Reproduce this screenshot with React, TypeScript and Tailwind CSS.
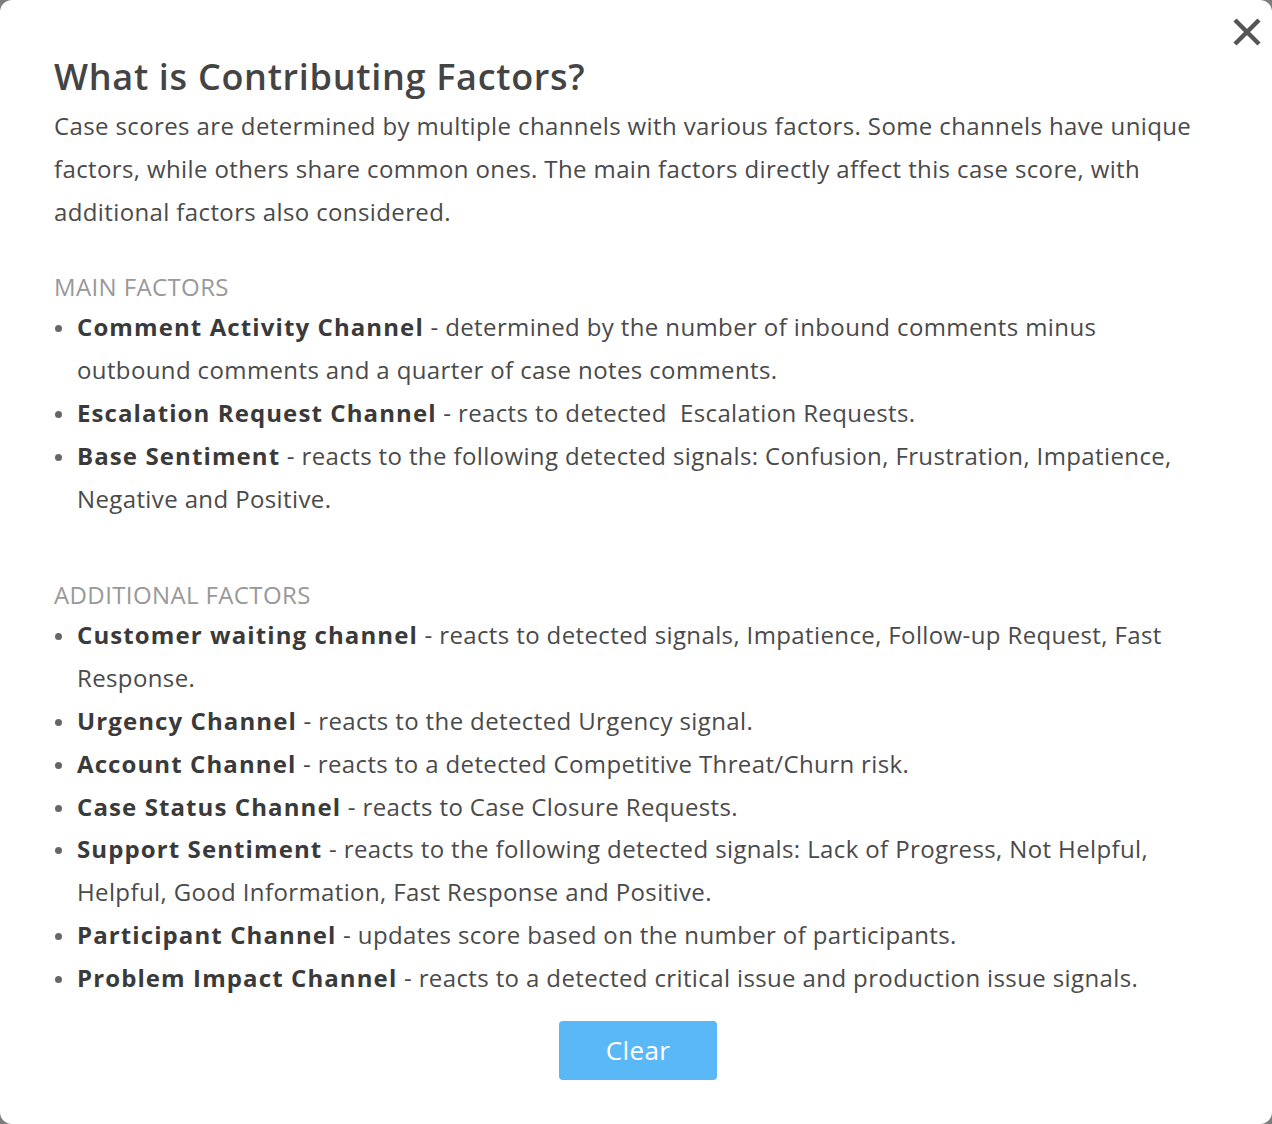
import React from 'react';

type Factor = { name: string; text: string };

const mainFactors: Factor[] = [
    { name: 'Comment Activity Channel', text: 'determined by the number of inbound comments minus outbound comments and a quarter of case notes comments.' },
    { name: 'Escalation Request Channel', text: 'reacts to detected \u00a0Escalation Requests.' },
    { name: 'Base Sentiment', text: 'reacts to the following detected signals: Confusion, Frustration, Impatience, Negative and Positive.' },
];

const additionalFactors: Factor[] = [
    { name: 'Customer waiting channel', text: 'reacts to detected signals, Impatience, Follow-up Request, Fast Response.' },
    { name: 'Urgency Channel', text: 'reacts to the detected Urgency signal.' },
    { name: 'Account Channel', text: 'reacts to a detected Competitive Threat/Churn risk.' },
    { name: 'Case Status Channel', text: 'reacts to Case Closure Requests.' },
    { name: 'Support Sentiment', text: 'reacts to the following detected signals: Lack of Progress, Not Helpful, Helpful, Good Information, Fast Response and Positive.' },
    { name: 'Participant Channel', text: 'updates score based on the number of participants.' },
    { name: 'Problem Impact Channel', text: 'reacts to a detected critical issue and production issue signals.' },
];

const FactorList: React.FC<{ items: Factor[] }> = ({ items }) => (
    <ul>
        {items.map((f) => (
            <li key={f.name} className="flex">
                <span className="w-[23px] shrink-0 flex items-start">
                    <span className="mt-[19px] ml-[1px] w-[7px] h-[7px] rounded-full bg-[#666]" />
                </span>
                <span>
                    <b className="font-bold tracking-[1.1px] text-[#3a3a3a]">{f.name}</b> - {f.text}
                </span>
            </li>
        ))}
    </ul>
);

export default function App() {
    return (
        <div className="w-[1272px] h-[1124px] bg-[#7d7d7d]" style={{ fontFamily: '"Open Sans", "Noto Sans", sans-serif' }}>
            <div className="relative w-full h-full bg-white rounded-[12px] pl-[54px] pr-[67px] pt-[55px] text-[#4a4a4a] text-[24px] leading-[42.8px] tracking-[0.38px]">
                {/* close */}
                <button className="absolute right-[10px] top-[17px] w-[30px] h-[30px] flex items-center justify-center">
                    <svg width="30" height="30" viewBox="0 0 30 30">
                        <path d="M3 3 L27 27 M27 3 L3 27" stroke="#555" strokeWidth="4.5" />
                    </svg>
                </button>

                <h2 className="text-[36px] leading-[44px] font-semibold tracking-[0.7px] text-[#444]">What is Contributing Factors?</h2>
                <p className="mt-[6px]">
                    Case scores are determined by multiple channels with various factors. Some channels have unique factors, while others share common ones. The main factors directly affect this case score, with additional factors also considered.
                </p>

                <div className="mt-[35px] leading-[38px] text-[#999] uppercase">Main Factors</div>
                <FactorList items={mainFactors} />

                <div className="mt-[56px] leading-[38px] text-[#999] uppercase">Additional Factors</div>
                <FactorList items={additionalFactors} />

                <div className="flex justify-center mt-[21px] pl-[17px]">
                    <button className="w-[158px] h-[59px] rounded-[4px] bg-[#59b8f5] text-white text-[26px]">Clear</button>
                </div>
            </div>
        </div>
    );
}
